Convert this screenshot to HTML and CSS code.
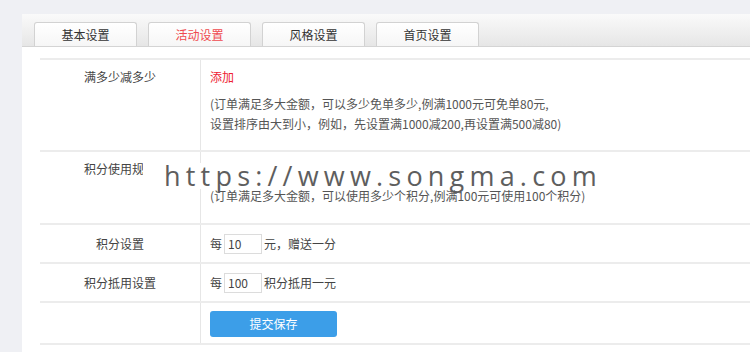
FILE: index.html
```html
<!DOCTYPE html>
<html lang="zh-CN">
<head>
  <meta charset="UTF-8">
  <title>活动设置</title>
  <link rel="stylesheet" href="styles.css">
</head>
<body>
  <div class="page">
    <div class="panel">
      <div class="tab-bar">
        <div class="tab">基本设置</div>
        <div class="tab active">活动设置</div>
        <div class="tab">风格设置</div>
        <div class="tab">首页设置</div>
      </div>
      <div class="content">
        <div class="form-table">
          <div class="row row-tall">
            <div class="label">满多少减多少</div>
            <div class="field">
              <a class="add-link">添加</a>
              <p class="hint">(订单满足多大金额，可以多少免单多少,例满1000元可免单80元,<br>设置排序由大到小，例如，先设置满1000减200,再设置满500减80)</p>
            </div>
          </div>
          <div class="row row-mid">
            <div class="label">积分使用规则</div>
            <div class="field">
              <a class="add-link">添加</a>
              <p class="hint">(订单满足多大金额，可以使用多少个积分,例满100元可使用100个积分)</p>
            </div>
          </div>
          <div class="row row-inline">
            <div class="label">积分设置</div>
            <div class="field">
              每 <input class="num-input" type="text" value="10"> 元，赠送一分
            </div>
          </div>
          <div class="row row-inline">
            <div class="label">积分抵用设置</div>
            <div class="field">
              每 <input class="num-input" type="text" value="100"> 积分抵用一元
            </div>
          </div>
          <div class="row row-submit">
            <div class="label"></div>
            <div class="field">
              <button class="submit-btn">提交保存</button>
            </div>
          </div>
        </div>
      </div>
    </div>
    <div class="watermark">https://www.songma.com</div>
  </div>
</body>
</html>
```

FILE: styles.css
```css
body {
  margin: 0;
  background: #eff0f4;
  font-family: "Noto Sans CJK SC", "Noto Sans", sans-serif;
  font-size: 12px;
  color: #444;
}
.page {
  position: relative;
  padding: 14px 0 0 22px;
  height: 338px;
  overflow: hidden;
}
.panel {
  background: #fff;
  height: 100%;
}
.tab-bar {
  display: flex;
  gap: 11px;
  height: 33px;
  padding-left: 12px;
  box-sizing: border-box;
  align-items: flex-end;
  background: linear-gradient(#fafafa, #e6e6e6);
  border-bottom: 1px solid #d4d4d4;
}
.tab {
  width: 101px;
  height: 23px;
  line-height: 23px;
  text-align: center;
  color: #333;
  background: linear-gradient(#ffffff, #f6f6f6);
  border: 1px solid #d2d2d2;
  border-bottom: none;
  border-radius: 3px 3px 0 0;
}
.tab.active {
  color: #ef4a4f;
}
.content {
  padding: 11px 0 0 18px;
}
.form-table {
  border-top: 2px solid #ececec;
}
.row {
  display: grid;
  grid-template-columns: 161px 1fr;
  border-bottom: 2px solid #ececec;
}
.label {
  text-align: center;
  color: #444;
  border-right: 1px solid #e6e6e6;
  line-height: 20px;
}
.field {
  padding-left: 9px;
  line-height: 20px;
}
.row-tall {
  height: 90px;
}
.row-mid {
  height: 71px;
}
.row-tall .label, .row-tall .field,
.row-mid .label, .row-mid .field {
  padding-top: 7px;
}
.add-link {
  display: block;
  color: #ee2233;
  cursor: pointer;
}
.hint {
  margin: 7px 0 0;
  color: #555;
}
.row-inline {
  height: 37px;
}
.row-inline .label, .row-inline .field {
  display: flex;
  align-items: center;
}
.row-inline .label {
  justify-content: center;
}
.num-input {
  width: 38px;
  height: 20px;
  box-sizing: border-box;
  margin: 0 2px;
  padding: 0 3px;
  border: 1px solid #dcdcdc;
  font: inherit;
  color: #444;
}
.row-submit {
  height: 40px;
}
.submit-btn {
  margin-top: 8px;
  width: 127px;
  height: 26px;
  border: none;
  border-radius: 3px;
  background: #3c9ee8;
  color: #fff;
  font: inherit;
  cursor: pointer;
}
.watermark {
  position: absolute;
  top: 163px;
  left: 143px;
  padding: 0 0 0 21px;
  background: #fff;
  font-family: "Open Sans", sans-serif;
  font-size: 27px;
  line-height: 26px;
  letter-spacing: 5.2px;
  color: #5e5e5e;
}
```
